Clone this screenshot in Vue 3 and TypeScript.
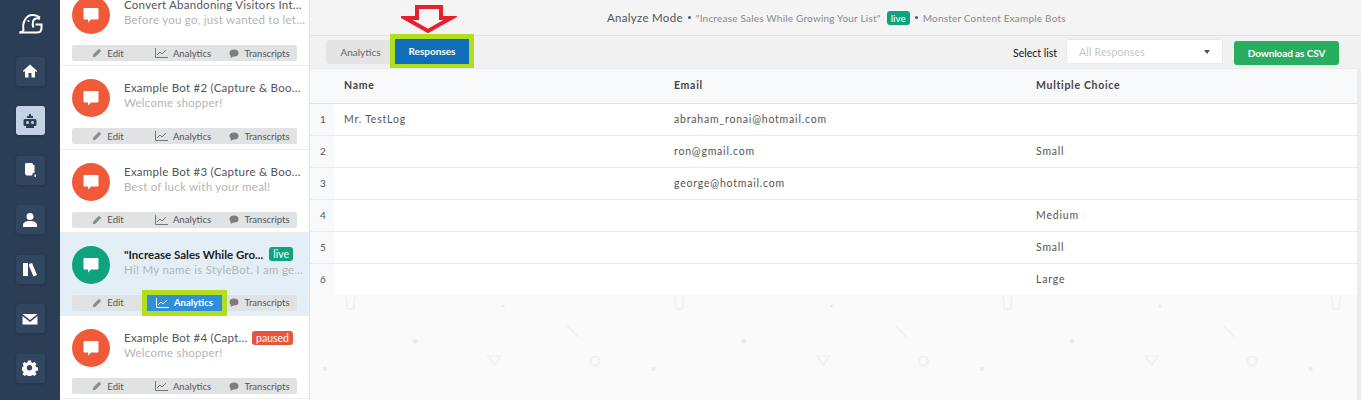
<script setup lang="ts">
interface Bot { title: string; preview: string; status?: 'live' | 'paused'; selected?: boolean }
const bots: Bot[] = [
  { title: 'Convert Abandoning Visitors Int...', preview: 'Before you go, just wanted to let...' },
  { title: 'Example Bot #2 (Capture & Boo...', preview: 'Welcome shopper!' },
  { title: 'Example Bot #3 (Capture & Boo...', preview: 'Best of luck with your meal!' },
  { title: '"Increase Sales While Gro...', preview: 'Hi! My name is StyleBot. I am ge...', status: 'live', selected: true },
  { title: 'Example Bot #4 (Capt...', preview: 'Welcome shopper!', status: 'paused' },
]
const navs = ['home', 'robot', 'docs', 'user', 'books', 'mail', 'gear']
const rows = [
  ['1', 'Mr. TestLog', 'abraham_ronai@hotmail.com', ''],
  ['2', '', 'ron@gmail.com', 'Small'],
  ['3', '', 'george@hotmail.com', ''],
  ['4', '', '', 'Medium'],
  ['5', '', '', 'Small'],
  ['6', '', '', 'Large'],
]
</script>

<template>
  <div class="app">
    <nav class="rail">
      <svg class="logo" width="25" height="22" viewBox="0 0 25 22" fill="none" stroke="#fff" stroke-width="2">
        <path d="M1.500 19.500c2 0 3.500-.7 4-2.500C4 9.500 8 2 14.500 2c2.800 0 5.500.8 7.500 2.500" />
        <path d="M1.500 19.500H19c3 0 4.500-2 4.500-4.500v-3.500h-6" />
        <path d="M22 6c-3-1.500-6-.8-7 2.500-.6 2-.5 4 .5 6" />
        <circle cx="10.500" cy="8" r="1.100" fill="#fff" stroke="none" />
      </svg>
      <div v-for="n in navs" :key="n" class="nav-btn" :class="{ active: n === 'robot' }">
        <svg width="16" height="16" viewBox="0 0 16 16" :fill="n === 'robot' ? '#2c3e55' : '#fff'">
          <path v-if="n === 'home'" d="M8 1.500 0.800 8l1 1.100L3 8v6.500h3.500V10h3v4.500H13V8l1.200 1.100 1-1.100z" />
          <template v-else-if="n === 'robot'">
            <path d="M7 1h2v2h2v2H5V3h2zM3 6h10a1.500 1.500 0 0 1 1.500 1.500v4A1.500 1.500 0 0 1 13 13h-1v2H4v-2H3a1.500 1.500 0 0 1-1.500-1.500v-4A1.500 1.500 0 0 1 3 6z" />
            <circle cx="5.500" cy="9.500" r="1.500" fill="#c3d3e4" /><circle cx="10.500" cy="9.500" r="1.500" fill="#c3d3e4" />
          </template>
          <path v-else-if="n === 'docs'" d="M4 1h6l1 1v1h1.500v8H11l-1 2.500H4.500L3 12V2zM12.500 12.500h1.500V15h-1.500z" />
          <path v-else-if="n === 'user'" d="M8 1a3.500 3.500 0 1 1 0 7 3.500 3.500 0 0 1 0-7zM1 15v-2c0-2.500 3-4 7-4s7 1.500 7 4v2z" />
          <path v-else-if="n === 'books'" d="M1 2h5v13H1zM7 3l3-1 5 12-3.500 1.500L7 5z" />
          <path v-else-if="n === 'mail'" d="M0.500 3h15L8 9zM0.500 5 8 11l7.500-6v8.500h-15z" />
          <path v-else fill-rule="evenodd" d="M6.500 1h3l.4 2 1.400.6 1.700-1.100 2 2-1.100 1.700.6 1.400 2 .4v3l-2 .4-.6 1.400 1.100 1.700-2 2-1.700-1.100-1.400.6-.4 1.500h-3l-.4-1.500-1.400-.6-1.700 1.100-2-2 1.100-1.700-.6-1.400-1.500-.4v-3l1.500-.4.6-1.400-1.100-1.700 2-2 1.700 1.100 1.400-.6zM8 5.500a2.700 2.700 0 1 0 0 5.400 2.700 2.700 0 0 0 0-5.400z" transform="translate(-.5 -.5)" />
        </svg>
      </div>
    </nav>

    <aside class="list">
      <article v-for="b in bots" :key="b.title" class="card" :class="{ selected: b.selected }">
        <div class="card-top">
          <div class="avatar" :class="{ green: b.selected }">
            <svg width="16" height="16" viewBox="0 0 16 16" fill="#fff"><path d="M1.500 1h13a1 1 0 0 1 1 1v9.500a1 1 0 0 1-1 1H8L5 15.500v-3H1.500a1 1 0 0 1-1-1V2a1 1 0 0 1 1-1z" /></svg>
          </div>
          <div class="card-text">
            <div class="title-row">
              <span class="title">{{ b.title }}</span>
              <span v-if="b.status" class="badge" :class="b.status">{{ b.status }}</span>
            </div>
            <div class="preview">{{ b.preview }}</div>
          </div>
        </div>
        <div class="actions">
          <span class="action edit">
            <svg width="10" height="10" viewBox="0 0 10 10" fill="#8b8b8b"><path d="M7 .8 9.200 3 3.500 8.700.8 9.200l.5-2.700z" /></svg>Edit
          </span>
          <span class="action analytics" :class="{ hl: b.selected }">
            <svg width="13" height="10" viewBox="0 0 13 10" fill="none" stroke="currentColor"><path d="M.5 0v9.500H13M2 7l3-3 2 2 4-4" /></svg>Analytics
          </span>
          <span class="action transcripts">
            <svg width="10" height="9" viewBox="0 0 10 9" fill="#7d7d7d"><ellipse cx="5" cy="4" rx="4.500" ry="3.500" /><path d="M2 6 1.500 9 5 7z" /></svg>Transcripts
          </span>
        </div>
      </article>
    </aside>

    <main class="main">
      <header class="top">
        <span class="mode">Analyze Mode</span><i class="dot"></i>
        <span class="small">"Increase Sales While Growing Your List"</span>
        <span class="badge live top-badge">live</span><i class="dot"></i>
        <span class="small">Monster Content Example Bots</span>
        <svg class="arrow" width="56" height="32" viewBox="0 0 56 32" fill="#f6f6f6" stroke="#e8202a" stroke-width="4"><path d="M16 4h24v11h10L27 28 4 15h12z" /></svg>
      </header>

      <div class="toolbar">
        <div class="tabs">
          <span class="tab">Analytics</span>
          <span class="tab on">Responses</span>
        </div>
        <div class="tools">
          <span class="sel-label">Select list</span>
          <div class="select"><span>All Responses</span><i class="caret"></i></div>
          <button class="csv">Download as CSV</button>
        </div>
      </div>

      <div class="content">
        <svg class="pattern" width="1047" height="105" aria-hidden="true">
          <defs>
            <pattern id="bg" width="328.500" height="105" patternUnits="userSpaceOnUse">
              <g fill="none" stroke="#efefef" stroke-width="1.500">
                <path d="M36 0l1.500 14h6L45 0" />
                <path d="M257 31l11 11" />
                <circle cx="285" cy="66" r="4.500" stroke-width="2" />
                <path d="M178 61h13l-6 9z" />
              </g>
              <g fill="#e9e9e9">
                <circle cx="193" cy="11" r="1.500" /><circle cx="105" cy="46" r="2.500" /><circle cx="15" cy="74" r="2" />
              </g>
            </pattern>
          </defs>
          <rect width="100%" height="105" fill="url(#bg)" />
        </svg>
        <div class="table">
          <div class="row head">
            <div class="idx"></div><div class="cell">Name</div><div class="cell">Email</div><div class="cell">Multiple Choice</div>
          </div>
          <div v-for="r in rows" :key="r[0]" class="row">
            <div class="idx">{{ r[0] }}</div>
            <div class="cell">{{ r[1] }}</div>
            <div class="cell">{{ r[2] }}</div>
            <div class="cell">{{ r[3] }}</div>
          </div>
        </div>
        <div class="scroll"></div>
      </div>
    </main>
  </div>
</template>

<style scoped>
.app { display: flex; width: 1361px; height: 400px; overflow: hidden; font-family: "Lato", "Liberation Sans", sans-serif; background: #fff; }
.rail { width: 60px; flex: none; background: #2c3e55; display: flex; flex-direction: column; align-items: center; gap: 20.500px; padding-top: 13px; box-sizing: border-box; }
.logo { margin-bottom: 1px; }
.nav-btn { width: 29px; height: 29px; flex: none; border-radius: 3px; background: #32475f; box-shadow: 0 1px 3px rgba(20, 30, 45, .35); display: flex; align-items: center; justify-content: center; }
.nav-btn.active { background: #c3d3e4; }
.list { width: 250px; flex: none; margin-top: -17px; border-right: 1px solid #e2e2e2; box-sizing: border-box; }
.card { height: 83.300px; box-sizing: border-box; padding: 13px 13px 0 12px; border-bottom: 1px solid #eeeeee; }
.card.selected { background: #e4eef7; }
.card-top { display: flex; height: 49px; gap: 14px; }
.avatar { width: 38px; height: 38px; flex: none; border-radius: 50%; background: #f15a38; display: flex; align-items: center; justify-content: center; }
.avatar.green { background: #0fa37d; }
.card-text { flex: 1; min-width: 0; padding-top: 1px; }
.title-row { display: flex; justify-content: space-between; align-items: center; height: 15px; padding-right: 3px; }
.title { font-size: 11.500px; color: #555; letter-spacing: .25px; white-space: nowrap; }
.selected .title { color: #222; font-weight: 700; letter-spacing: 0; }
.preview { font-size: 11.500px; line-height: 15px; color: #b4b4b4; letter-spacing: .25px; white-space: nowrap; }
.badge { color: #fff; font-size: 10.500px; border-radius: 3px; line-height: 14px; height: 14px; }
.badge.live { background: #0fa37d; padding: 0 4px; }
.badge.paused { background: #e8553d; padding: 0 4px; }
.actions { display: grid; grid-template-columns: 72px 78px 75px; height: 16px; width: 225px; background: #e1e2e3; border-radius: 2px; font-size: 9.500px; color: #555; position: relative; }
.action { display: flex; align-items: center; justify-content: center; gap: 5px; white-space: nowrap; }
.action.analytics svg { color: #777; }
.analytics.hl { background: #2f8fdc; color: #fff; font-weight: 700; outline: 5px solid #b2de1d; z-index: 1; margin-left: 3px; }
.analytics.hl svg { color: #fff; }
.main { flex: 1; display: flex; flex-direction: column; min-width: 0; background: #fafafa; }
.top { height: 36px; flex: none; box-sizing: border-box; background: #f4f4f4; border-bottom: 1px solid #e3e3e3; display: flex; align-items: center; padding-left: 297px; position: relative; }
.mode { font-size: 11.500px; color: #555; letter-spacing: .3px; }
.dot { width: 3px; height: 3px; background: #555; border-radius: 50%; margin: 0 5px; }
.small { font-size: 10px; color: #8a8a8a; letter-spacing: .2px; }
.top-badge { margin-left: 6px; font-size: 10px; }
.arrow { position: absolute; left: 91px; top: 3px; }
.toolbar { height: 32px; flex: none; background: #f1f1f1; display: flex; justify-content: space-between; align-items: flex-start; padding: 4px 22px 0 16px; box-sizing: border-box; }
.tabs { display: flex; }
.tab { height: 24px; line-height: 24px; box-sizing: border-box; width: 69px; text-align: center; font-size: 10px; color: #666; background: #e4e4e4; border-radius: 3px 0 0 3px; }
.tab.on { width: 74px; height: 25px; margin-top: -1px; background: #0f6eb8; color: #fff; font-weight: 700; border-radius: 0; outline: 5px solid #b2de1d; position: relative; }
.tools { display: flex; align-items: flex-start; margin-top: -1px; }
.sel-label { font-size: 10.500px; color: #111; margin: 8px 9px 0 0; }
.select { width: 157px; height: 25px; box-sizing: border-box; background: #fff; border: 1px solid #e8e8e8; border-radius: 3px; display: flex; align-items: center; justify-content: space-between; padding: 0 12px; font-size: 10.500px; color: #c6c6c6; letter-spacing: .2px; }
.caret { border: 3px solid transparent; border-top: 4px solid #555; border-bottom: 0; }
.csv { width: 105px; height: 24px; margin: 2px 0 0 11px; border: 0; border-radius: 3px; background: #27ae60; color: #fff; font: 700 10px "Lato", sans-serif; letter-spacing: -.1px; padding: 0 0 1px; }
.content { flex: 1; position: relative; min-height: 0; }
.pattern { position: absolute; left: 0; top: 227px; }
.scroll { position: absolute; right: 0; top: 0; bottom: 0; width: 4px; background: #ececec; }
.table { position: relative; width: 1047px; background: #fff; }
.row { display: grid; grid-template-columns: 24px 340px 362px 321px; height: 32px; border-bottom: 1px solid #eaeaea; box-sizing: border-box; }
.row:last-child { border-bottom: 0; height: 31px; }
.row.head { height: 36px; background: #f8f9fa; border-top: 1px solid #eaeaea; border-bottom: 1px solid #dedede; }
.idx { background: #f8f9fa; color: #555; font-size: 10px; display: flex; align-items: center; padding: 0 0 1px 10px; box-sizing: border-box; }
.row.head .idx { background: transparent; }
.cell { display: flex; align-items: center; padding: 0 0 1px 10px; box-sizing: border-box; font-size: 10.500px; color: #555; letter-spacing: .8px; white-space: nowrap; }
.row .cell:nth-child(3), .row .cell:nth-child(4) { padding-left: 0; }
.row.head .cell { font-weight: 700; color: #444; letter-spacing: .7px; padding-bottom: 2px; }
</style>
